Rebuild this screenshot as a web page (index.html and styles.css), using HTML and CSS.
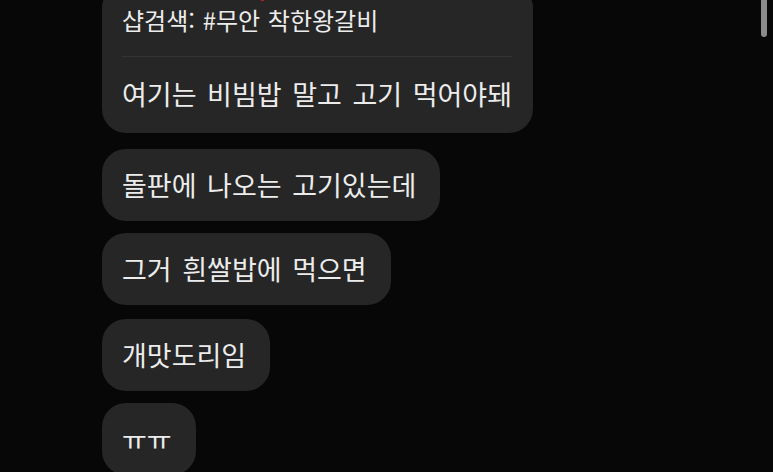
FILE: index.html
```html
<!DOCTYPE html>
<html lang="ko">
<head>
    <meta charset="UTF-8">
    <meta name="viewport" content="width=device-width, initial-scale=1.0">
    <title>메시지</title>
    <link rel="stylesheet" href="styles.css">
</head>
<body>
<div class="chat">
    <div class="thread">
        <div class="bubble bubble-card">
            <span class="emoji-tip"></span>
            <div class="card-head">샵검색: #무안 착한왕갈비</div>
            <div class="card-body">여기는 비빔밥 말고 고기 먹어야돼</div>
        </div>
        <div class="bubble">돌판에 나오는 고기있는데</div>
        <div class="bubble">그거 흰쌀밥에 먹으면</div>
        <div class="bubble">개맛도리임</div>
        <div class="bubble">ㅠㅠ</div>
    </div>
    <div class="scroll-thumb"></div>
</div>
</body>
</html>
```

FILE: styles.css
```css
body {
    margin: 0;
    background-color: #070707;
    font-family: "Noto Sans CJK KR", "Noto Sans", sans-serif;
    color: #ececec;
    overflow: hidden;
}

.chat {
    position: relative;
    height: 472px;
    overflow: hidden;
}

.thread {
    display: flex;
    flex-direction: column;
    align-items: flex-start;
    gap: 12px;
    padding-left: 102px;
    margin-top: -16px; /* list is scrolled, first bubble is cut off */
}

.bubble {
    position: relative;
    background-color: #262626;
    border-radius: 24px;
    padding: 20px 24px 20px 20px;
    font-size: 27px;
    line-height: 32px;
    word-spacing: 3px;
    white-space: nowrap;
}

.bubble:nth-child(4) {
    margin-top: 2px;
}

.bubble-card {
    padding-right: 21px;
    padding-bottom: 23px;
    margin-bottom: 4px;
}

.card-head {
    padding-bottom: 20px;
    border-bottom: 1px solid #333333;
    font-size: 24px;
    word-spacing: 1px;
}

.card-body {
    margin-top: 21px;
}

.emoji-tip {
    position: absolute;
    left: 158px;
    top: 12px;
    width: 5px;
    height: 5px;
    border-radius: 50%;
    background-color: #c4232b;
}

.scroll-thumb {
    position: absolute;
    right: 6px;
    top: 0;
    width: 6px;
    height: 37px;
    border-radius: 0 0 3px 3px;
    background-color: #8a8a8a;
}
```
